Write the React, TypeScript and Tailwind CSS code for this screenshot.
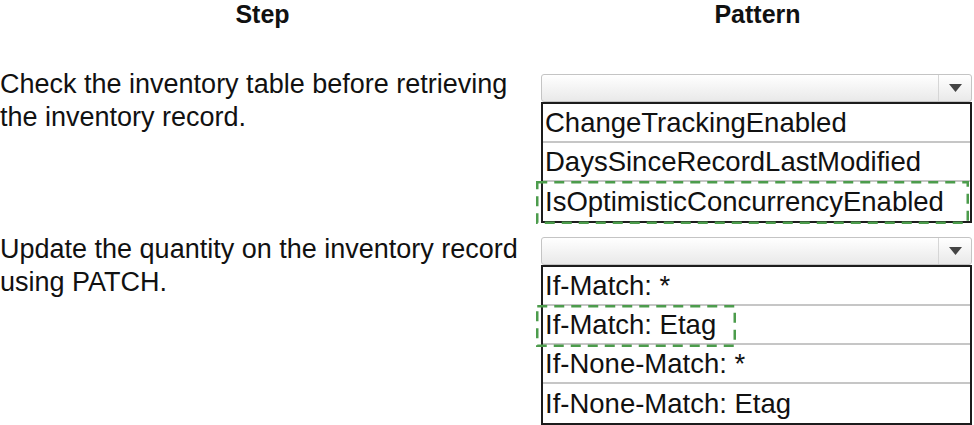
import React from 'react';

type Section = {
  step: string[];
  options: string[];
  picked: number;
  boxWidth: number;
  textTop: string;
};

const sections: Section[] = [
  {
    step: ['Check the inventory table before retrieving', 'the inventory record.'],
    options: ['ChangeTrackingEnabled', 'DaysSinceRecordLastModified', 'IsOptimisticConcurrencyEnabled'],
    picked: 2,
    boxWidth: 433,
    textTop: 'mt-[-6px]',
  },
  {
    step: ['Update the quantity on the inventory record', 'using PATCH.'],
    options: ['If-Match: *', 'If-Match: Etag', 'If-None-Match: *', 'If-None-Match: Etag'],
    picked: 1,
    boxWidth: 200,
    textTop: 'mt-[-4px]',
  },
];

// dashed green marker drawn over the chosen answer
const Marker = ({ width, height }: { width: number; height: number }) => (
  <svg
    className="pointer-events-none absolute left-[-7px] top-[-1px]"
    width={width}
    height={height}
  >
    <rect
      x={1.25}
      y={1.25}
      width={width - 2.5}
      height={height - 2.5}
      fill="none"
      stroke="#4c9c4c"
      strokeWidth={2.5}
      strokeDasharray="10 7"
    />
  </svg>
);

const Select = () => (
  <div className="flex h-[28px] rounded-[3px] border border-[#c4c4c4] bg-gradient-to-b from-white to-[#e9e9e9]">
    <div className="flex-1" />
    <div className="flex w-[33px] items-center justify-center border-l border-[#d6d6d6]">
      <svg width="13" height="8" viewBox="0 0 13 8">
        <path d="M0 0 H13 L6.5 8 Z" fill="#444" />
      </svg>
    </div>
  </div>
);

const App: React.FC = () => {
  return (
    <div
      className="h-[425px] w-[974px] overflow-hidden bg-white text-[#111]"
      style={{ fontFamily: '"Liberation Sans", Arial, sans-serif' }}
    >
      {/* Header */}
      <div className="flex h-[30px] text-[25px] font-bold leading-[28px]">
        <div className="w-[541px] pr-[16px] text-center">Step</div>
        <div className="flex-1 text-center">Pattern</div>
      </div>

      <div className="mt-[44px] flex flex-col gap-[14px]">
        {sections.map((s, i) => (
          <div key={i} className="flex">
            <div className={`w-[541px] text-[27px] leading-[33px] ${s.textTop}`}>
              {s.step.map((line) => (
                <div key={line}>{line}</div>
              ))}
            </div>
            <div className="w-[431px]">
              <Select />
              <div className="border-2 border-[#1c1c1c]">
                {s.options.map((opt, j) => (
                  <div
                    key={opt}
                    className={`relative flex h-[39px] items-center pl-[2px] text-[27.5px] leading-none ${
                      j < s.options.length - 1 ? 'border-b-2 border-[#c6c6c6]' : ''
                    }`}
                  >
                    {opt}
                    {j === s.picked && <Marker width={s.boxWidth} height={j === s.options.length - 1 ? 43 : 42} />}
                  </div>
                ))}
              </div>
            </div>
          </div>
        ))}
      </div>
    </div>
  );
};

export default App;
